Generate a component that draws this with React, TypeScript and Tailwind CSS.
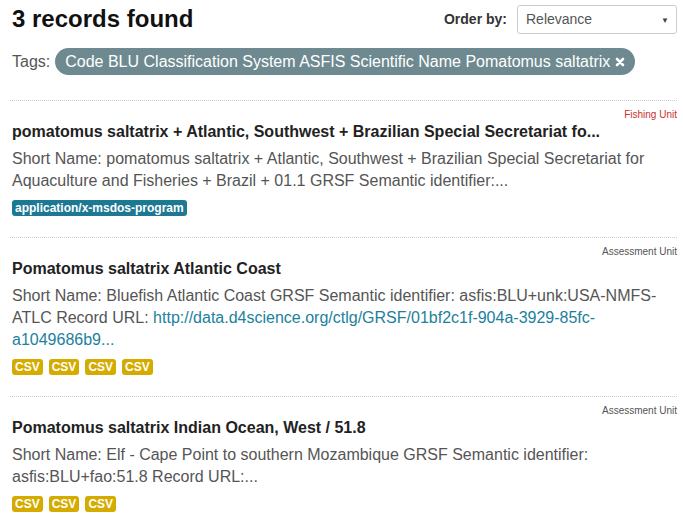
import React from 'react';

type Record = {
  kind: string;
  kindClass: string;
  title: string;
  body: React.ReactNode;
  badges: { label: string; className: string }[];
};

const records: Record[] = [
  {
    kind: 'Fishing Unit',
    kindClass: 'text-[#c9302c]',
    title: 'pomatomus saltatrix + Atlantic, Southwest + Brazilian Special Secretariat fo...',
    body: (
      <>
        Short Name: pomatomus saltatrix + Atlantic, Southwest + Brazilian Special Secretariat for Aquaculture and
        Fisheries + Brazil + 01.1 GRSF Semantic identifier:...
      </>
    ),
    badges: [{ label: 'application/x-msdos-program', className: 'bg-[#1d7893]' }],
  },
  {
    kind: 'Assessment Unit',
    kindClass: 'text-[#555]',
    title: 'Pomatomus saltatrix Atlantic Coast',
    body: (
      <>
        Short Name: Bluefish Atlantic Coast GRSF Semantic identifier: asfis:BLU+unk:USA-NMFS-ATLC Record URL:{' '}
        <a className="text-[#21819c]">http://data.d4science.org/ctlg/GRSF/01bf2c1f-904a-3929-85fc-a1049686b9...</a>
      </>
    ),
    badges: [1, 2, 3, 4].map(() => ({ label: 'CSV', className: 'bg-[#d6ab00]' })),
  },
  {
    kind: 'Assessment Unit',
    kindClass: 'text-[#555]',
    title: 'Pomatomus saltatrix Indian Ocean, West / 51.8',
    body: (
      <>
        Short Name: Elf - Cape Point to southern Mozambique GRSF Semantic identifier: asfis:BLU+fao:51.8 Record
        URL:...
      </>
    ),
    badges: [1, 2, 3].map(() => ({ label: 'CSV', className: 'bg-[#d6ab00]' })),
  },
];

export default function App() {
  return (
    <div className="w-[683px] h-[517px] overflow-hidden bg-white font-['Liberation_Sans',Arial,sans-serif] text-[#333]">
      {/* Header */}
      <div className="flex items-center justify-between pl-[12px] pr-[6px] pt-[4px]">
        <h3 className="text-[24px] font-bold text-[#111] leading-[30px]">3 records found</h3>
        <div className="flex items-center gap-[10px]">
          <span className="text-[14px] font-bold text-[#333]">Order by:</span>
          <div className="relative w-[160px] h-[29px] border border-[#ccc] rounded-[3px] flex items-center pl-[8px] text-[14px] text-[#555]">
            Relevance
            <span className="absolute right-[7px] top-[9px] text-[8px] text-[#444]">▼</span>
          </div>
        </div>
      </div>

      {/* Tags */}
      <div className="flex items-center gap-[5px] pl-[12px] mt-[14px] text-[16px]">
        <span className="text-[#555]">Tags:</span>
        <span className="flex items-center gap-[5px] h-[27px] px-[10px] rounded-full bg-[#6e8a90] text-white">
          Code BLU Classification System ASFIS Scientific Name Pomatomus saltatrix
          <svg width="10" height="10" viewBox="0 0 10 10">
            <path d="M2 2 L8 8 M8 2 L2 8" stroke="white" strokeWidth="2.6" strokeLinecap="round" />
          </svg>
        </span>
      </div>

      {/* Records */}
      <div className="mt-[25px] pl-[10px] pr-[6px]">
        {records.map((r, i) => (
          <div key={i} className="border-t border-dotted border-[#ccc] pl-[2px] pt-[7px] pb-[21px]">
            <div className={`text-right text-[10px] leading-[13px] ${r.kindClass}`}>{r.kind}</div>
            <div className="text-[16px] font-bold text-[#222] leading-[22px]">{r.title}</div>
            <p className="text-[16px] text-[#555] leading-[22px] mt-[5px] pr-[20px]">{r.body}</p>
            <div className="flex gap-[6px] mt-[8px]">
              {r.badges.map((b, j) => (
                <span
                  key={j}
                  className={`${b.className} text-white text-[12px] font-bold leading-[16px] px-[3px] rounded-[3px]`}
                >
                  {b.label}
                </span>
              ))}
            </div>
          </div>
        ))}
      </div>
    </div>
  );
}
